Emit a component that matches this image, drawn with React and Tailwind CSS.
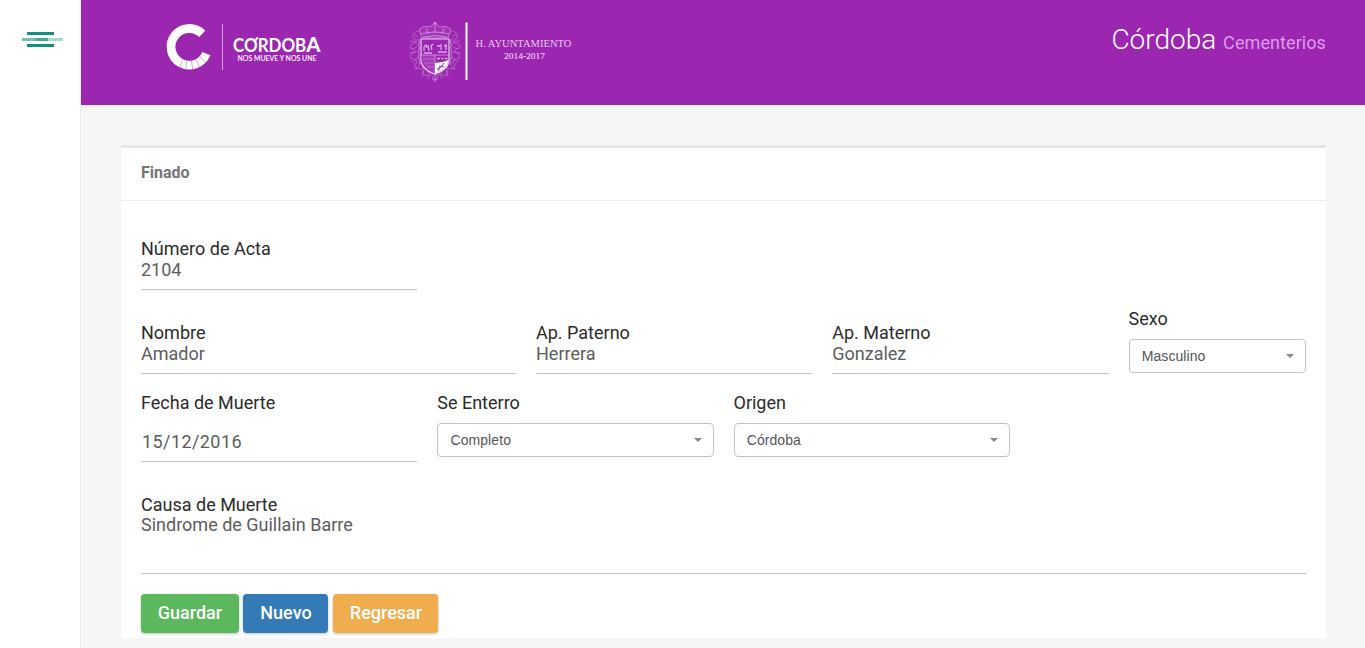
import React from "react";

function MenuIcon() {
  return (
    <svg width="42" height="16" viewBox="0 0 42 16" shapeRendering="crispEdges" aria-label="Menu">
      <rect x="5" y="0" width="27" height="3" fill="#168f7e" />
      <rect x="0" y="6" width="41" height="3" fill="#a5dcd1" />
      <rect x="0" y="6" width="14" height="3" fill="#75c0b2" />
      <rect x="14" y="6" width="12" height="3" fill="#48a697" />
      <rect x="5" y="12" width="27" height="3" fill="#168f7e" />
    </svg>
  );
}

function CordobaLogo() {
  return (
    <svg width="160" height="50" viewBox="164 22 160 50" fill="none">
      <path d="M202.2 33.8A18.3 18.3 0 1 0 206.3 53.6" stroke="#fff" strokeWidth="8.8" />
      <path
        d="M182 60.5L179.5 69M186.5 61L185.8 70M191.5 61L192.8 70M196 59.5L200 68M200 56.5L206 63"
        stroke="#b565c8"
        strokeWidth="0.6"
      />
      <path d="M222.5 24V70" stroke="#d39be0" strokeWidth="1" />
      <text
        x="233"
        y="52.3"
        fill="#fff"
        fontFamily="Lato, sans-serif"
        fontWeight="700"
        fontSize="18"
        textLength="87.5"
        lengthAdjust="spacingAndGlyphs"
      >
        CORDOB<tspan fontSize="21.5" fontWeight="900">A</tspan>
      </text>
      <path d="M253.8 42L257.8 37.5" stroke="#fff" strokeWidth="2" />
      <text
        x="237.5"
        y="60.8"
        fill="#fff"
        fontFamily="Lato, sans-serif"
        stroke="#fff"
        strokeWidth="0.1"
        fontSize="7"
        textLength="79"
        lengthAdjust="spacingAndGlyphs"
      >
        NOS MUEVE Y NOS UNE
      </text>
    </svg>
  );
}

function CouncilLogo() {
  return (
    <svg width="166" height="64" viewBox="408 20 166 64" fill="none">
      <g stroke="#cf93dc">
        <path
          d="M418 31q-6 1-5 7q4 1 3 5q-6 0-6 5q5 0 5 4q-6 2-4 7q5-1 6 3q-4 4 0 7q4-2 6 1q-1 5 4 6q2-4 5-1q1 4 3 6q2-2 3-6q3-3 5 1q5-1 4-6q2-3 6-1q4-3 0-7q1-4 6-3q2-5-4-7q0-4 5-4q0-5-6-5q-1-4 3-5q1-6-5-7"
          strokeWidth="1.1"
          opacity="0.45"
        />
        <path
          d="M418 37l-4-3M417 42l-7-1M417 47l-5 2M417 52l-8 1M418 58l-6 4M420 64l-5 6M424 70l-2 7M430 74l-2 5M452 37l4-3M453 42l7-1M453 47l5 2M453 52l8 1M452 58l6 4M450 64l5 6M446 70l2 7M440 74l2 5"
          strokeWidth="0.9"
          opacity="0.55"
        />
        <path
          d="M418 39q3 3 0 6q3 3 0 6q2 3 0 6q3 3 1 6q4 1 4 5q4 0 5 4q4-1 7 3q3-4 7-3q1-4 5-4q0-4 4-5q-2-3 1-6q-2-3 0-6q-3-3 0-6q-3-3 0-6"
          strokeWidth="1.2"
          opacity="0.7"
        />
        <path d="M435 74v8M432 79h6" strokeWidth="0.9" opacity="0.7" />
      </g>
      <path d="M422 38l-3-8q4-5 11-3l5-4 5 4q7-2 11 3l-3 8z" fill="#a234b5" stroke="#c988d7" strokeWidth="0.9" />
      <path d="M421 34q14-4 28 0M423 37q12-3 24 0M426 28l2 6M435 22v11M444 28l-2 6M433 23h4" stroke="#d3a0df" strokeWidth="0.8" />
      <path d="M421 39h28v20c0 8-7 13-14 15c-7-2-14-7-14-15z" fill="#9b26af" stroke="#ecd0f1" strokeWidth="1.2" />
      <path d="M421.5 55h13.5v18c-7-2-13-7-13.5-14z" fill="#a83bba" />
      <path d="M421 55h28M435 55v18" stroke="#d39be0" strokeWidth="0.8" />
      <path
        d="M424 51v-4l2-2 1 3M428 45l1 6M432 50l-1-4 2-2M437 46h3M441 44v6M444 46h3M446 44v6M424 53h8M438 52h9"
        stroke="#dcaae6"
        strokeWidth="1.3"
      />
      <path d="M423 59h11M424 63h10M427 67h7" stroke="#bd6fcd" strokeWidth="0.9" />
      <path d="M437 58.5h3M441.5 58.5h2M445 58.5h2.5" stroke="#dcaae6" strokeWidth="1.6" />
      <path d="M435 63q7 0 13.5-3c-.5 7-7 11.500-13.5 13.5z" fill="#fff" />
      <path d="M437 69l4-2 3-4M439 66l5 1M438 71l2-3" stroke="#9b26af" strokeWidth="1" />
      <path d="M466.5 22.5V80" stroke="#fff" strokeWidth="2" />
      <g fill="#e8c6ef" fontFamily="'Liberation Serif', serif">
        <text x="475.5" y="47.4" fontSize="10.5" textLength="96" lengthAdjust="spacingAndGlyphs">
          H. AYUNTAMIENTO
        </text>
        <text x="504" y="59" fontSize="8.5" stroke="#e8c6ef" strokeWidth="0.2" textLength="41" lengthAdjust="spacingAndGlyphs">
          2014-2017
        </text>
      </g>
    </svg>
  );
}

function Label({ children }) {
  return <label className="block text-lg leading-5 text-[#2b2b2b]">{children}</label>;
}

function TextField({ label, value, className = "" }) {
  return (
    <div className={`pt-3.5 ${className}`}>
      <Label>{label}</Label>
      <div className="h-[31px] border-b border-[#c2c2c2] text-lg leading-[22px] text-[#5c5c5c]">{value}</div>
    </div>
  );
}

function SelectField({ label, value, className = "" }) {
  return (
    <div className={className}>
      <Label>{label}</Label>
      <button className="mt-2.5 flex h-[34px] w-full items-center justify-between rounded border border-[#c2c2c2] bg-white pr-[11px] pl-[12.2px] font-['Liberation_Sans',sans-serif] text-sm tracking-[0.08px] text-[#555]">
        <span>{value}</span>
        <svg width="8" height="4" viewBox="0 0 8 4" fill="#888">
          <path d="M0 0h8L4 4z" />
        </svg>
      </button>
    </div>
  );
}

function ActionButton({ className, children }) {
  return (
    <button className={`h-[39px] rounded-sm pb-0.5 text-lg font-medium text-white shadow-[0_1px_3px_rgba(0,0,0,0.25)] ${className}`}>
      {children}
    </button>
  );
}

export default function App() {
  return (
    <div className="flex h-[648px] w-[1365px] overflow-hidden bg-[#f6f6f6] font-[Roboto,sans-serif]">
      <aside className="w-[81px] shrink-0 border-r border-[#eee] bg-white pt-8 pl-[22px]">
        <MenuIcon />
      </aside>
      <div className="flex min-w-0 flex-1 flex-col">
        <header className="flex h-[105px] shrink-0 items-start bg-[#9b26af] pr-[39px]">
          <div className="mt-[22px] ml-[83px]">
            <CordobaLogo />
          </div>
          <div className="mt-5 ml-[84px]">
            <CouncilLogo />
          </div>
          <h1 className="mt-[22px] ml-auto text-[28px] leading-9 font-light text-white">
            Córdoba <small className="text-lg font-normal tracking-[0.08px] text-[#dd9be8]">Cementerios</small>
          </h1>
        </header>
        <main className="mt-10 mr-[39px] ml-10 h-[493px] border-t-3 border-[#e6e6e6] bg-white">
          <h2 className="h-[53px] border-b border-[#eee] px-5 pt-[15px] text-base leading-5 font-bold text-[#757575]">Finado</h2>
          <form className="px-5 pt-6">
            <div className="grid grid-cols-12 gap-x-5">
              <TextField className="col-span-3" label="Número de Acta" value="2104" />
            </div>
            <div className="mt-[19px] grid grid-cols-12 gap-x-5">
              <TextField className="col-span-4" label="Nombre" value="Amador" />
              <TextField className="col-span-3" label="Ap. Paterno" value="Herrera" />
              <TextField className="col-span-3" label="Ap. Materno" value="Gonzalez" />
              <SelectField className="col-span-2" label="Sexo" value="Masculino" />
            </div>
            <div className="mt-[19px] grid grid-cols-12 gap-x-5">
              <div className="col-span-3">
                <Label>Fecha de Muerte</Label>
                <div className="h-[49px] border-b border-[#c2c2c2] pt-[18px] pl-px text-lg leading-[22px] tracking-[0.42px] text-[#5c5c5c]">
                  15/12/2016
                </div>
              </div>
              <SelectField className="col-span-3" label="Se Enterro" value="Completo" />
              <SelectField className="col-span-3" label="Origen" value="Córdoba" />
            </div>
            <div className="mt-[33px]">
              <Label>Causa de Muerte</Label>
              <div className="h-[59px] border-b border-[#c2c2c2] text-lg leading-5 text-[#5c5c5c]">Sindrome de Guillain Barre</div>
            </div>
            <div className="mt-5 flex">
              <ActionButton className="w-[98px] bg-[#5cb85c]">Guardar</ActionButton>
              <ActionButton className="ml-1 w-[85px] bg-[#337ab7] pl-px">Nuevo</ActionButton>
              <ActionButton className="ml-[5px] w-[105px] bg-[#f0ad4e] pl-px">Regresar</ActionButton>
            </div>
          </form>
        </main>
      </div>
    </div>
  );
}
